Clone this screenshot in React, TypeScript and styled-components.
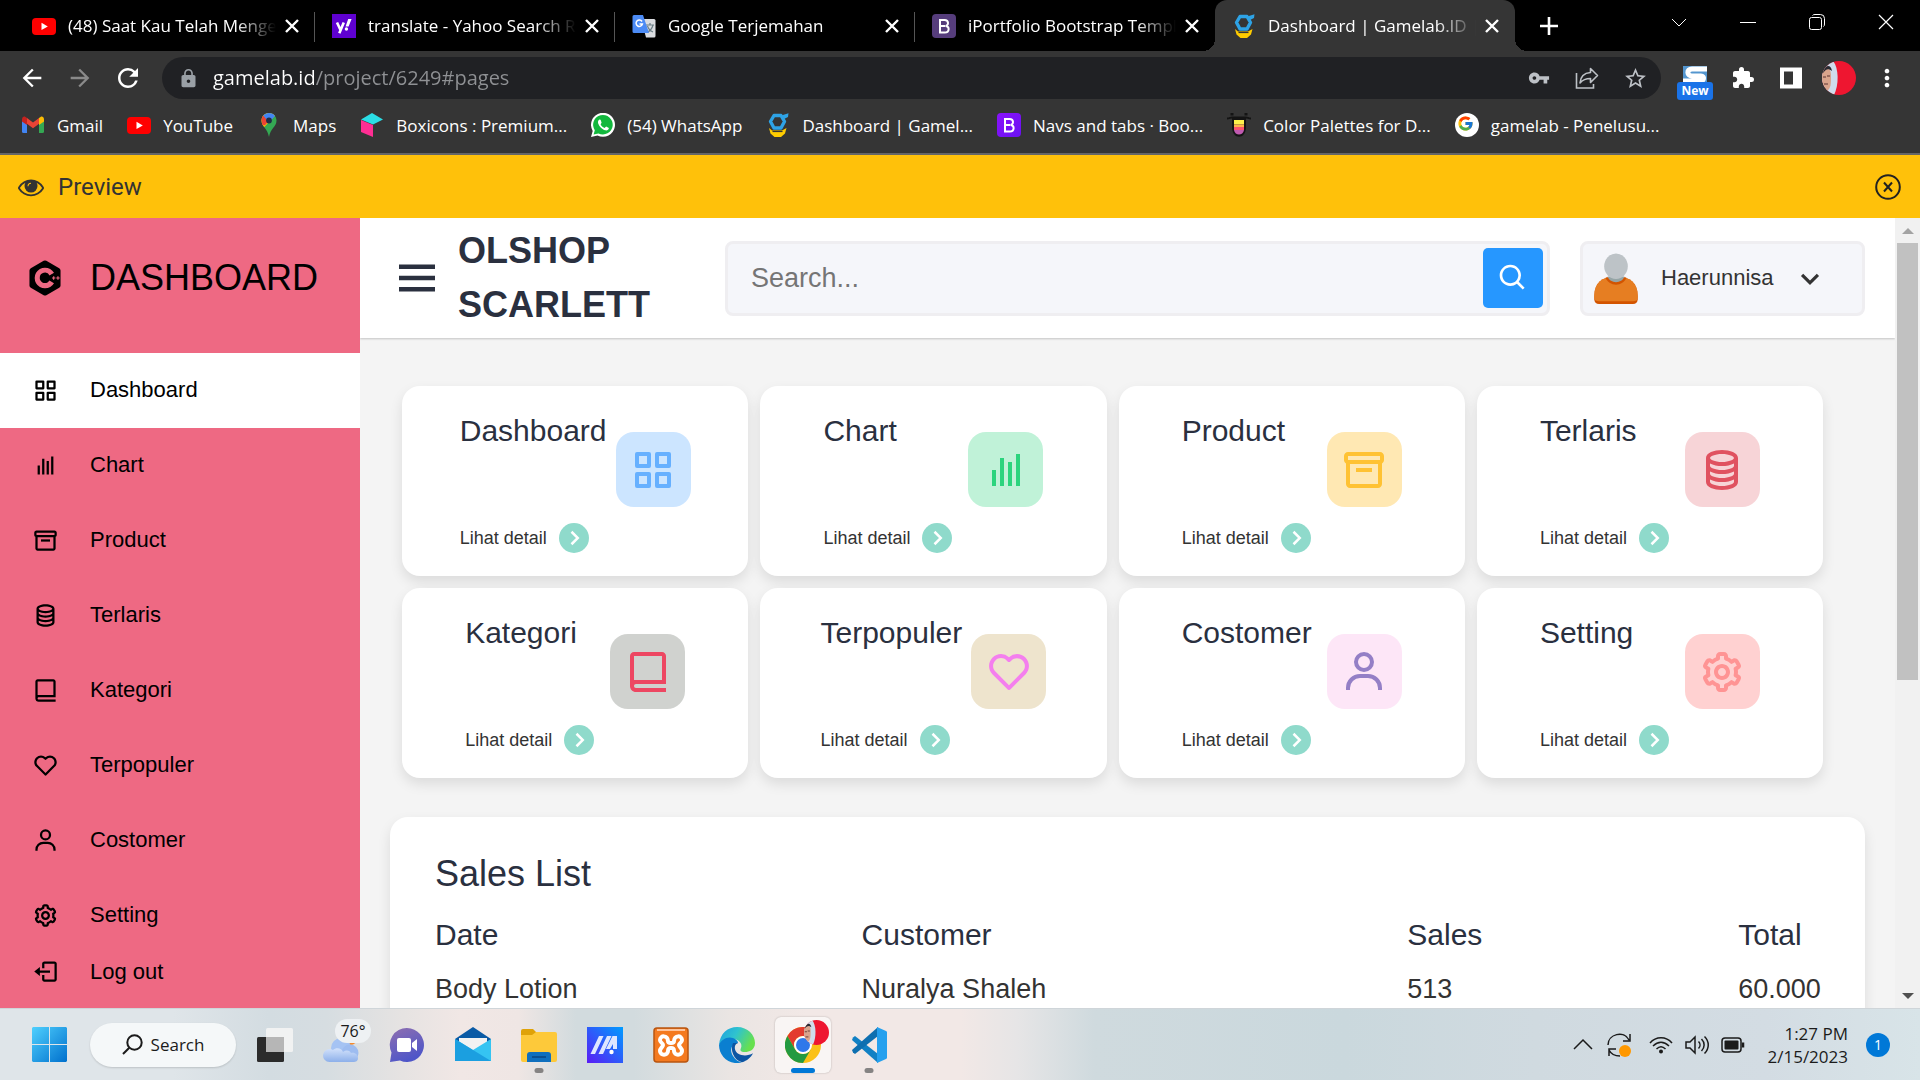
import React from "react";
import styled, { createGlobalStyle } from "styled-components";
import {
  BiBarChart,
  BiChevronDown,
  BiChevronRight,
  BiCog,
  BiCoinStack,
  BiGridAlt,
  BiHeart,
  BiLogOut,
  BiLogoCPlusPlus,
  BiMenu,
  BiSearch,
  BiUser,
} from "react-icons/bi";
import { FcGoogle } from "react-icons/fc";
import { MdArrowBack, MdArrowForward, MdExtension, MdLock, MdMoreVert, MdRefresh, MdStarOutline, MdVpnKey } from "react-icons/md";

const ui = `"Open Sans", "Noto Sans", sans-serif`;
const page = `"Liberation Sans", Arial, sans-serif`;

const GlobalStyle = createGlobalStyle`
  *, *::before, *::after { box-sizing: border-box; }
  body { margin: 0; font-family: ${page}; }
  button { border: 0; padding: 0; margin: 0; background: none; color: inherit; font: inherit; cursor: pointer; }
  a { color: inherit; text-decoration: none; }
  svg { display: block; flex: none; }
`;

const Screen = styled.div`
  display: flex;
  flex-direction: column;
  height: 100vh;
  overflow: hidden;
`;

/* ---------- browser chrome ---------- */

const TabStrip = styled.div`
  display: flex;
  flex: none;
  height: 51px;
  padding-left: 15px;
  background: #000;
  color: #fff;
  font-family: ${ui};
  font-size: 17px;
`;

const Tab = styled.div<{ $active?: boolean; $divider?: boolean }>`
  position: relative;
  display: flex;
  align-items: center;
  gap: 12px;
  flex: 0 1 300px;
  min-width: 0;
  padding: 0 11px 0 17px;
  background: ${(p) => (p.$active ? "#353535" : "transparent")};
  border-radius: 12px 12px 0 0;

  &::after {
    content: "";
    position: absolute;
    right: 0;
    top: 12px;
    width: 1px;
    height: 30px;
    background: ${(p) => (p.$divider ? "#555" : "transparent")};
  }
`;

const TabCurve = styled.span<{ $side: "left" | "right" }>`
  position: absolute;
  bottom: 0;
  ${(p) => p.$side}: -12px;
  width: 12px;
  height: 12px;
  background: radial-gradient(circle at ${(p) => p.$side} top, transparent 12px, #353535 12px);
`;

const TabLabel = styled.button`
  flex: 1;
  min-width: 0;
  margin-right: -8px;
  overflow: hidden;
  text-align: left;
  white-space: nowrap;
  line-height: 28px;
  mask-image: linear-gradient(to right, #000 calc(100% - 40px), transparent);
`;

const IconButton = styled.button<{ $w?: number }>`
  display: flex;
  flex: none;
  align-items: center;
  justify-content: center;
  width: ${(p) => p.$w ?? 24}px;
  height: 40px;
`;

const NewTab = styled(IconButton)`
  align-self: center;
  margin-left: 14px;
`;

const WindowButtons = styled.div`
  display: flex;
  margin-left: auto;
  padding-top: 2px;
`;

const Toolbar = styled.div`
  display: flex;
  flex: none;
  align-items: center;
  height: 54px;
  padding: 0 9px 0 20px;
  background: #353535;
  color: #fff;
`;

const NavButtons = styled.div`
  display: flex;
  gap: 24px;
  margin-right: 22px;
`;

const AddressBar = styled.div`
  display: flex;
  flex: 1;
  align-items: center;
  height: 42px;
  padding: 0 2px 0 16px;
  border-radius: 21px;
  background: #202124;
  color: #bdc1c6;
`;

const AddressInput = styled.input`
  flex: 1;
  min-width: 0;
  margin-left: 14px;
  padding: 0;
  border: 0;
  outline: 0;
  color: transparent;
  background: linear-gradient(to right, #fff 102px, #8f9194 102px);
  background-clip: text;
  font-family: ${ui};
  font-size: 20px;
  line-height: 32px;
`;

const Extensions = styled.div`
  display: flex;
  margin-left: 10px;
`;

const ExtensionButton = styled(IconButton)`
  position: relative;
`;

const NewBadge = styled.span`
  position: absolute;
  left: 6px;
  bottom: -2px;
  width: 36px;
  border-radius: 3px;
  background: #1a73e8;
  color: #fff;
  font: bold 12px/18px ${ui};
  text-align: center;
`;

const Bookmarks = styled.nav`
  display: flex;
  flex: none;
  align-items: center;
  gap: 24px;
  height: 48px;
  padding: 0 20px 8px 21px;
  background: #353535;
  color: #fff;
  font-family: ${ui};
  font-size: 17px;
`;

const Bookmark = styled.a`
  display: flex;
  align-items: center;
  gap: 12px;
  white-space: nowrap;
`;

/* ---------- preview bar ---------- */

const PreviewBar = styled.div`
  display: flex;
  flex: none;
  align-items: center;
  height: 65px;
  padding: 0 19px 0 18px;
  border-top: 2px solid #666;
  background: #ffc10a;
  color: #333;
  font-family: Roboto, sans-serif;
  font-size: 24px;
`;

const PreviewTitle = styled.span`
  flex: 1;
  margin-left: 14px;
`;

/* ---------- dashboard page ---------- */

const Viewport = styled.div`
  display: grid;
  grid-template-columns: 360px 1fr 25px;
  flex: 1;
  min-height: 0;
`;

const Sidebar = styled.aside`
  overflow: hidden;
  background: #ee6983;
  color: #000;
`;

const Brand = styled.a`
  display: flex;
  align-items: center;
  height: 120px;
  margin-bottom: 15px;
  font-size: 36px;
`;

const IconSlot = styled.span`
  display: flex;
  flex: none;
  justify-content: center;
  width: 90px;
`;

const MenuList = styled.ul`
  margin: 0;
  padding: 0;
  list-style: none;
`;

const MenuLink = styled.a<{ $active?: boolean; $short?: boolean }>`
  display: flex;
  align-items: center;
  height: ${(p) => (p.$short ? 38 : 75)}px;
  padding-bottom: 1px;
  background: ${(p) => (p.$active ? "#fff" : "transparent")};
  font-size: 22px;
`;

const Main = styled.main`
  display: flex;
  flex-direction: column;
  min-width: 0;
  overflow: hidden;
  background: #f4f4f4;
`;

const Header = styled.header`
  position: relative;
  display: flex;
  flex: none;
  align-items: center;
  height: 120px;
  padding: 0 30px;
  background: #fff;
  box-shadow: 0 1px 2px rgba(0, 0, 0, 0.2);
`;

const ShopTitle = styled.h1`
  width: 267px;
  margin: 0 0 0 14px;
  padding-right: 60px;
  color: #2a303f;
  font-size: 36px;
  font-weight: bold;
  line-height: 54px;
`;

const SearchBox = styled.form`
  display: flex;
  flex: 1;
  align-items: center;
  height: 75px;
  margin-right: 30px;
  padding: 0 4px 0 23px;
  border: 3px solid #efeef1;
  border-radius: 8px;
  background: #f5f6fa;
`;

const SearchInput = styled.input`
  flex: 1;
  min-width: 0;
  padding: 0;
  border: 0;
  outline: 0;
  background: transparent;
  font: 27px/36px ${page};

  &::placeholder {
    color: #757575;
  }
`;

const SearchButton = styled.button`
  display: flex;
  align-items: center;
  justify-content: center;
  width: 60px;
  height: 60px;
  border-radius: 5px;
  background: #2697ff;
  color: #fff;
`;

const Profile = styled.button`
  display: flex;
  align-items: center;
  width: 285px;
  height: 75px;
  padding: 0 8px;
  border: 3px solid #efeef1;
  border-radius: 8px;
  background: #f5f6fa;
  color: #333;
  font-size: 22px;
`;

const ProfileName = styled.span`
  margin: 0 17px 0 20px;
`;

const Content = styled.div`
  padding: 48px 30px 0;
`;

const Cards = styled.section`
  display: grid;
  grid-template-columns: repeat(4, 1fr);
  gap: 12px;
  margin: 0 42px 39px 12px;
`;

const Card = styled.article`
  display: flex;
  align-items: flex-start;
  justify-content: center;
  gap: 9px;
  padding: 22px 0 23px;
  border-radius: 18px;
  background: #fff;
  box-shadow: 0 6px 13px rgba(0, 0, 0, 0.1);
`;

const CardText = styled.div`
  min-width: 136px;
`;

const CardTitle = styled.h2`
  margin: 0 0 69px;
  color: #2a303f;
  font-size: 30px;
  font-weight: normal;
  line-height: 46px;
`;

const DetailLink = styled.a`
  display: flex;
  align-items: center;
  gap: 12px;
  color: #333;
  font-size: 18px;
  line-height: 30px;
`;

const Dot = styled.span`
  display: flex;
  align-items: center;
  justify-content: center;
  width: 30px;
  height: 30px;
  border-radius: 50%;
  background: #8fdacb;
  color: #fff;
`;

const CardIcon = styled.div<{ $bg: string; $fg: string }>`
  display: flex;
  align-items: center;
  justify-content: center;
  width: 75px;
  height: 75px;
  margin-top: 24px;
  border-radius: 18px;
  background: ${(p) => p.$bg};
  color: ${(p) => p.$fg};
`;

const Sales = styled.section`
  padding: 30px 45px;
  border-radius: 18px;
  background: #fff;
  box-shadow: 0 6px 13px rgba(0, 0, 0, 0.1);
`;

const SalesTitle = styled.h2`
  margin: 0 0 7px;
  color: #2a303f;
  font-size: 36px;
  font-weight: normal;
  line-height: 54px;
`;

const SalesTable = styled.table`
  width: 100%;
  border-collapse: collapse;
  table-layout: fixed;
  text-align: left;
  white-space: nowrap;

  th {
    padding: 0;
    color: #2a303f;
    font-size: 30px;
    font-weight: normal;
    line-height: 54px;
  }
  td {
    padding: 0;
    color: #333;
    font-size: 27px;
    line-height: 54px;
  }
`;

const Col = styled.col<{ $share: number }>`
  width: ${(p) => p.$share}%;
`;

const ScrollTrack = styled.div`
  display: flex;
  flex-direction: column;
  align-items: center;
  justify-content: space-between;
  background: #f1f1f1;
`;

const ScrollArrow = styled.span<{ $down?: boolean }>`
  display: flex;
  flex: none;
  align-items: center;
  height: 25px;
  color: ${(p) => (p.$down ? "#505050" : "#a3a3a3")};
`;

const ScrollRail = styled.div`
  flex: 1;
  width: 21px;
`;

const ScrollThumb = styled.div`
  height: 59%;
  background: #c1c1c1;
`;

/* ---------- taskbar ---------- */

const Taskbar = styled.footer`
  position: relative;
  display: flex;
  flex: none;
  align-items: center;
  height: 72px;
  padding: 0 30px 0 32px;
  border-top: 1px solid #cfd5d9;
  background: linear-gradient(
    to right,
    #dfe5e9 0,
    #dfe5e9 9%,
    #d3dce1 14%,
    #d6dde1 17%,
    #e6e3e2 21%,
    #f1e7e5 24%,
    #efe6e4 27%,
    #d2dbde 30%,
    #d2dbde 33%,
    #eae5e3 38%,
    #f2e8e6 42%,
    #f2e8e6 50%,
    #e6e5e6 53%,
    #cfdade 57%,
    #cad8dd 70%,
    #d0dae0 80%,
    #d3dce3 92%,
    #d8e4e8 100%
  );
  color: #1b1b1b;
  font-family: ${ui};
  font-size: 17px;
`;

const TaskSearch = styled.button`
  display: flex;
  align-items: center;
  justify-content: center;
  gap: 8px;
  width: 146px;
  height: 44px;
  margin: 0 6px 0 23px;
  border-radius: 22px;
  background: #f5f8f9;
  box-shadow: 0 1px 2px rgba(0, 0, 0, 0.15);
`;

const TaskApp = styled.button<{ $open?: boolean }>`
  position: relative;
  display: flex;
  align-items: center;
  justify-content: center;
  width: 56px;
  height: 56px;
  margin: 0 5px;
  border-radius: 6px;
  background: ${(p) => (p.$open ? "#f9f5f4" : "transparent")};
  box-shadow: ${(p) => (p.$open ? "0 0 2px rgba(0, 0, 0, 0.25)" : "none")};
`;

const Running = styled.span<{ $active?: boolean }>`
  position: absolute;
  bottom: 0;
  left: 50%;
  width: ${(p) => (p.$active ? 24 : 9)}px;
  height: 5px;
  border-radius: 3px;
  background: ${(p) => (p.$active ? "#0078d7" : "#858383")};
  transform: translateX(-50%);
`;

const Temperature = styled.span`
  position: absolute;
  top: 2px;
  left: 22px;
  width: 36px;
  border-radius: 12px;
  background: #eef1f3;
  font-size: 16px;
  line-height: 24px;
  text-align: center;
`;

const Tray = styled.div`
  display: flex;
  align-items: center;
  gap: 18px;
  margin-left: auto;
`;

const TrayGroup = styled.div`
  display: flex;
  gap: 12px;
`;

const Clock = styled.div`
  width: 85px;
  font-size: 17px;
  line-height: 23px;
  text-align: right;
`;

const Notifications = styled.button`
  width: 24px;
  height: 24px;
  border-radius: 50%;
  background: #0078d7;
  color: #fff;
  font-size: 14px;
  line-height: 24px;
`;

/* ---------- drawings ---------- */

type IconProps = { size: number };

const BoxIcon = ({ size }: IconProps) => (
  <svg width={size} height={size} viewBox="0 0 24 24" fill="currentColor">
    <path d="M20 3H4c-1.103 0-2 .897-2 2v2c0 .736.405 1.375 1 1.722V19c0 1.103.897 2 2 2h14c1.103 0 2-.897 2-2V8.722c.595-.347 1-.986 1-1.722V5c0-1.103-.897-2-2-2zM4 5h16v2H4zM5 19V9h14v10z" fillRule="evenodd" />
    <path d="M8 11h8v2H8z" />
  </svg>
);

const BookIcon = ({ size }: IconProps) => (
  <svg width={size} height={size} viewBox="0 0 24 24" fill="currentColor">
    <path d="M19 2H5C3.900 2 3 2.900 3 4v15c0 1.700 1.300 3 3 3h15v-2H6c-.6 0-1-.4-1-1s.4-1 1-1h15V4c0-1.100-.9-2-2-2zM5 16V4h14v12z" fillRule="evenodd" />
  </svg>
);

const YouTube = () => (
  <svg width="24" height="24" viewBox="0 0 24 24">
    <rect x="0" y="4" width="24" height="17" rx="4" fill="#f00" />
    <path d="M9.500 8.800v7.200l6.300-3.600z" fill="#fff" />
  </svg>
);

const Yahoo = () => (
  <svg width="24" height="24" viewBox="0 0 24 24">
    <rect width="24" height="24" fill="#5f01d1" />
    <path d="M5 8.500l3.400 7.200M11.800 8.500L7.300 19.300" stroke="#fff" strokeWidth="2.600" fill="none" />
    <path d="M16.200 5h3.400l-3 7.500h-3z" fill="#fff" />
    <circle cx="14.400" cy="15" r="1.700" fill="#fff" />
  </svg>
);

const Translate = () => (
  <svg width="24" height="24" viewBox="0 0 24 24">
    <path d="M9 5h13a1.500 1.500 0 0 1 1.500 1.500V22a1.500 1.500 0 0 1-1.500 1.500h-8z" fill="#dadce0" />
    <path d="M14 11h8M18 9v2M21 11c-1 4-3 6-6 7.500M15.500 12c1 3 3 5 5.500 6" stroke="#6b7f86" strokeWidth="1.200" fill="none" />
    <path d="M2 1h9l6 18H2A1.500 1.500 0 0 1 .5 17.500v-15A1.500 1.500 0 0 1 2 1z" fill="#4c8bf5" />
    <path d="M10 7.500A3.200 3.200 0 1 0 10.400 10H7.500" stroke="#fff" strokeWidth="1.500" fill="none" />
  </svg>
);

const Bootstrap = ({ from, to }: { from: string; to: string }) => (
  <svg width="24" height="24" viewBox="0 0 24 24">
    <defs>
      <linearGradient id={"bs" + from.slice(1)} x1="0" y1="0" x2="1" y2="1">
        <stop offset="0" stopColor={from} />
        <stop offset="1" stopColor={to} />
      </linearGradient>
    </defs>
    <rect width="24" height="24" rx="4" fill={`url(#bs${from.slice(1)})`} />
    <path d="M8 6v12.500h4.800c5 0 5-6.500.6-6.500 3.600-.2 3.600-6-.8-6zM8 12h5" stroke="#fff" strokeWidth="2" fill="none" />
  </svg>
);

const Gamelab = () => (
  <svg width="24" height="24" viewBox="0 0 24 24">
    <path d="M16 2.200l6.500-2-.5 3.800-4 2z" fill="#2ea3e6" />
    <path d="M8 2.500h7l3.500 6-3.500 6.500H8L4.500 8.500z" fill="none" stroke="#2ea3e6" strokeWidth="3.400" strokeLinejoin="round" />
    <path d="M3 15l3 2.500h10l4.500-2.500-1.500 5.500-4 3.500H8.500l-4-3.500z" fill="#fc0" />
    <path d="M6.500 18.500h10" stroke="#353535" strokeWidth="1.200" />
  </svg>
);

const Gmail = () => (
  <svg width="24" height="24" viewBox="0 0 24 24">
    <path d="M1 6v12.500A1.500 1.500 0 0 0 2.500 20H6V10z" fill="#4285f4" />
    <path d="M23 6v12.500a1.500 1.500 0 0 1-1.500 1.500H18V10z" fill="#34a853" />
    <path d="M6 10.800V5l6 4.500L18 5v5.800l-6 4.500z" fill="#ea4335" />
    <path d="M1 6.500v2l5 3.500V5L4.500 4C3 3 1 4 1 6.500z" fill="#c5221f" />
    <path d="M23 6.500v2L18 12V5l1.500-1C21 3 23 4 23 6.500z" fill="#fbbc04" />
  </svg>
);

const MapsPin = () => (
  <svg width="24" height="24" viewBox="0 0 24 24">
    <path d="M12 0c4 0 7.500 3 7.500 7.500C19.500 14 13.500 15 12 24 10.500 15 4.500 14 4.500 7.500 4.500 3 8 0 12 0z" fill="#34a853" />
    <path d="M4.500 7.500c0 3 1.300 4.800 2.800 6.500L17.800 2.800C16.400 1 14.300 0 12 0 8 0 4.500 3 4.500 7.500z" fill="#fbbc04" />
    <path d="M4.500 7.500c0-2 .8-3.800 2-5l5.500 5-4 4.700-2.500-.2z" fill="#ea4335" />
    <path d="M6.300 2.600C7.700 1 9.800 0 12 0c2.500 0 4.700 1.200 6 3l-6 6.500z" fill="#4285f4" />
    <circle cx="12" cy="7.500" r="2.900" fill="#202c44" />
  </svg>
);

const Boxicons = () => (
  <svg width="24" height="24" viewBox="0 0 24 24">
    <path d="M1 6.500L12 0l11 6.500-10 5z" fill="#2bdde5" />
    <path d="M1 7l12 5v12L1 19z" fill="#ff2e93" />
  </svg>
);

const WhatsApp = () => (
  <svg width="24" height="24" viewBox="0 0 24 24">
    <path d="M0 24l1.700-6A12 12 0 1 1 6.500 22.500z" fill="#fff" />
    <path d="M2.600 21.400l1.200-4.200a9.800 9.800 0 1 1 3.600 3.200z" fill="#12b83d" />
    <path d="M8.500 6.500c-1 .5-2 2-1.300 4 1 3 4 6 7 6.800 2 .5 3.500-.7 3.700-2.200l-2.800-1.500-1.500 1.500c-2-.8-3.300-2.200-4-3.800l1-1.500-1-3z" fill="#fff" />
  </svg>
);

const ColorHunt = () => (
  <svg width="24" height="24" viewBox="0 0 24 24">
    <path d="M5 0v2.500M19 0v2.500" stroke="#141414" strokeWidth="3" />
    <path d="M0 5.500c3 0 3-1 5-1h14c2 0 2 1 5 1" stroke="#141414" strokeWidth="2" fill="none" />
    <path d="M5 5h14v9c0 13-14 13-14 0z" fill="#141414" />
    <path d="M7 7h10v4.500H7z" fill="#fcf04a" />
    <path d="M7 11.500h10V14H7z" fill="#ffb24a" />
    <path d="M7 14h10v3H7z" fill="#f9546e" />
    <path d="M7 17h10c-1 6-9 6-10 0z" fill="#c05ab0" />
  </svg>
);

const GoogleBadge = () => (
  <svg width="24" height="24" viewBox="0 0 24 24">
    <circle cx="12" cy="12" r="12" fill="#fff" />
    <FcGoogle x="2" y="2" width="20" height="20" />
  </svg>
);

const Cross = ({ size, width }: { size: number; width: number }) => (
  <svg width={size} height={size} viewBox={`0 0 ${size} ${size}`}>
    <path d={`M1 1L${size - 1} ${size - 1}M${size - 1} 1L1 ${size - 1}`} stroke="#fff" strokeWidth={width} />
  </svg>
);

const Portrait = ({ size }: { size: number }) => (
  <svg width={size} height={size} viewBox="0 0 34 34">
    <defs>
      <clipPath id={"face" + size}>
        <circle cx="17" cy="17" r="17" />
      </clipPath>
    </defs>
    <g clipPath={`url(#face${size})`}>
      <rect width="34" height="34" fill="#ee1630" />
      <path d="M0 0h11c6 7 6 24 1 34H0z" fill="#cfdcec" />
      <path d="M0 9c5-5 9-2 9 6s0 12-4 15l-5-2z" fill="#d9a48c" />
      <path d="M1 9c4-6 8-5 9 1-4-3-6-2-9 2z" fill="#2a2a32" />
      <path d="M1 16h3M5 15h3M2 23h4" stroke="#5e3432" strokeWidth="1.200" />
    </g>
  </svg>
);

const Eye = () => (
  <svg width="26" height="26" viewBox="0 0 1792 1792" fill="#333">
    <path d="M1664 960q-152-236-381-353 61 104 61 225 0 185-131.500 316.500t-316.500 131.500-316.500-131.500-131.500-316.500q0-121 61-225-229 117-381 353 133 205 333.500 326.500t434.500 121.500 434.500-121.500 333.500-326.500zm-720-384q0-20-14-34t-34-14q-125 0-214.500 89.500t-89.500 214.500q0 20 14 34t34 14 34-14 14-34q0-86 61-147t147-61q20 0 34-14t14-34zm848 384q0 34-20 69-140 230-376.500 368.500t-499.500 138.500-499.500-139-376.500-368q-20-35-20-69t20-69q140-229 376.500-368t499.500-139 499.500 139 376.500 368q20 35 20 69z" />
    <circle cx="896" cy="832" r="400" />
    <path d="M690 850c0-130 80-220 206-220" stroke="#ffc10a" strokeWidth="70" fill="none" />
  </svg>
);

const CloseCircle = () => (
  <svg width="26" height="26" viewBox="0 0 26 26" fill="none" stroke="#222" strokeWidth="2">
    <circle cx="13" cy="13" r="11.800" />
    <path d="M9 8.500l8 9M17 8.500l-8 9" />
  </svg>
);

const Person = () => (
  <svg width="50" height="51" viewBox="-1 0 52 54">
    <path d="M2 46c0-14 8-21 23-21s23 7 23 21v3c0 3-2 5-5 5H7c-3 0-5-2-5-5z" fill="#d35400" />
    <path d="M2 45c0-13 8-20 23-20s23 7 23 20v2c0 3-2 4-5 4H7c-3 0-5-1-5-4z" fill="#e67e22" />
    <path d="M14 26c3 10 19 10 22 0z" fill="#d35400" />
    <path d="M16 25c3 8 15 8 18 0z" fill="#95a5a6" />
    <ellipse cx="25" cy="14" rx="12.500" ry="13.500" fill="#bdc3c7" />
  </svg>
);

const Triangle = ({ down }: { down?: boolean }) => (
  <svg width="12" height="6" viewBox="0 0 12 6" fill="currentColor">
    <path d={down ? "M0 0h12l-6 6z" : "M0 6h12L6 0z"} />
  </svg>
);

const Share = () => (
  <svg width="24" height="24" viewBox="0 0 24 24" fill="none" stroke="currentColor" strokeWidth="1.600">
    <path d="M1.500 7v15h17v-4" />
    <path d="M5 17c.5-6.500 4-10 10.500-10.500V2.500l7 7-7 7v-4C11 12.500 7.500 14 5 17z" strokeLinejoin="round" />
  </svg>
);

const SidePanel = () => (
  <svg width="24" height="24" viewBox="0 0 24 24">
    <path d="M1 1.500h22v21H1z" fill="#fff" />
    <path d="M5 5.500h9v13H5z" fill="#353535" />
  </svg>
);

const SExtension = () => (
  <svg width="24" height="24" viewBox="0 0 24 24">
    <rect width="24" height="24" fill="#5496cf" />
    <path d="M24 3H9C3 3 4 10 9 10h9c4 0 3 5-1 5H0" stroke="#fff" strokeWidth="5" fill="none" />
  </svg>
);

const Windows = () => (
  <svg width="35" height="35" viewBox="0 0 35 35">
    <defs>
      <linearGradient id="win" x1="0" y1="0" x2="1" y2="1">
        <stop offset="0" stopColor="#4fd0fe" />
        <stop offset="1" stopColor="#0070cd" />
      </linearGradient>
    </defs>
    <path d="M1 0h16v17H0V1zM18 0h16l1 1v16H18zM0 18h17v17H1l-1-1zM18 18h17v16l-1 1H18z" fill="url(#win)" />
  </svg>
);

const TaskLens = () => (
  <svg width="21" height="21" viewBox="0 0 21 21" fill="none" stroke="#1b1b1b" strokeWidth="2">
    <circle cx="12.500" cy="8.500" r="7.200" />
    <path d="M7.300 13.700L1 20" />
  </svg>
);

const TaskView = () => (
  <svg width="36" height="36" viewBox="0 0 36 36">
    <rect x="0" y="10" width="27" height="25" rx="1.500" fill="#2b2b2b" />
    <rect x="9" y="1" width="27" height="24" rx="1.500" fill="#f1f2f2" />
    <path d="M9 10h18v15H9z" fill="#b6b6b6" />
  </svg>
);

const Weather = () => (
  <svg width="36" height="36" viewBox="0 0 36 36">
    <defs>
      <linearGradient id="cloud" x1="0" y1="0" x2="0" y2="1">
        <stop offset="0" stopColor="#d3e2fb" />
        <stop offset="1" stopColor="#8db0ea" />
      </linearGradient>
    </defs>
    <circle cx="27" cy="10" r="8" fill="#f58a2c" />
    <circle cx="18" cy="21" r="10" fill="#a5c3f3" />
    <circle cx="27" cy="26" r="8.500" fill="#9dbcf0" />
    <path d="M7 35a6.500 6.500 0 1 1 3-12c3-3 9-2 10 2 3-2 6-2 8 1 4-1 7 2 7 5s-2 4-5 4z" fill="url(#cloud)" />
  </svg>
);

const Chat = () => (
  <svg width="36" height="36" viewBox="0 0 36 36">
    <defs>
      <linearGradient id="chat" x1="0" y1="0" x2="0.400" y2="1">
        <stop offset="0" stopColor="#8f6fb0" />
        <stop offset="1" stopColor="#4f56c8" />
      </linearGradient>
    </defs>
    <path d="M18 1a17 17 0 1 1-7 32.500L1 35l1.500-9.500A17 17 0 0 1 18 1z" fill="url(#chat)" />
    <rect x="8" y="11" width="14" height="14" rx="2" fill="#fff" />
    <path d="M23 16l5-4v12l-5-4z" fill="#fff" />
  </svg>
);

const Mail = () => (
  <svg width="36" height="36" viewBox="0 0 36 36">
    <path d="M0 12L18 0l18 12v4H0z" fill="#0a5aa5" />
    <path d="M4 11h28v10L18 26 4 21z" fill="#f2f2f2" />
    <path d="M0 12l18 11L36 12v22H0z" fill="#35c4f2" />
    <path d="M0 12l36 22H0z" fill="#1b9fe0" />
  </svg>
);

const Folder = () => (
  <svg width="36" height="36" viewBox="0 0 36 36">
    <path d="M0 4a2 2 0 0 1 2-2h10l4 4-4 3H0z" fill="#dfa208" />
    <path d="M0 8h11l4-3h19a2 2 0 0 1 2 2v26a2 2 0 0 1-2 2H2a2 2 0 0 1-2-2z" fill="#fdc93a" />
    <path d="M6 35v-7a3 3 0 0 1 3-3h18a3 3 0 0 1 3 3v7z" fill="#0f6fbe" />
    <path d="M11 30h14" stroke="#0a4f91" strokeWidth="2" />
  </svg>
);

const MyAsus = () => (
  <svg width="36" height="36" viewBox="0 0 36 36">
    <defs>
      <linearGradient id="asus" x1="0" y1="1" x2="1" y2="0">
        <stop offset="0" stopColor="#5a1cf5" />
        <stop offset="1" stopColor="#009cff" />
      </linearGradient>
    </defs>
    <rect width="36" height="36" fill="url(#asus)" />
    <path d="M3.500 27l8.500-18h4.500L8 27zM11.500 27L20 9h4.500L16 27zM19 22l6.500-13H30v13h-4v-5l-3 5z" fill="#dfe6ff" />
    <circle cx="24.500" cy="25" r="2.200" fill="#fff" />
  </svg>
);

const Xampp = () => (
  <svg width="36" height="36" viewBox="0 0 36 36">
    <rect x="1" y="1" width="34" height="34" rx="3" fill="#f47a20" stroke="#b85510" strokeWidth="1.500" />
    <path d="M4 3h28" stroke="#ffc49b" strokeWidth="2" />
    <path
      d="M15 14c0-6-8-6-8-1 0 3 3 3 3 5s-3 3-3 6c0 5 8 5 8 0 0-3 1-3 3-3s3 0 3 3c0 5 8 5 8 0 0-3-3-4-3-6s3-2 3-5c0-5-8-5-8 1 0 2-1 2-3 2s-3 0-3-2z"
      fill="none"
      stroke="#fff"
      strokeWidth="4"
    />
  </svg>
);

const Edge = () => (
  <svg width="36" height="36" viewBox="0 0 36 36">
    <defs>
      <linearGradient id="edgeTop" x1="0" y1="0" x2="1" y2="0.400">
        <stop offset="0" stopColor="#1e9fe0" />
        <stop offset="0.500" stopColor="#2fc3cf" />
        <stop offset="1" stopColor="#67e04f" />
      </linearGradient>
    </defs>
    <path d="M0 18C1 6 9 0 18 0c11 0 18 8 18 16 0 7-6 9-10 9-5 0-5-2-4-4 2-5-3-9-8-9C7 12 2 15 0 18z" fill="url(#edgeTop)" />
    <path d="M0 18c2-5 8-9 14-7 3 1 5 3 5 5-6 0-9 7-5 13 2 3 5 6 9 6.300C10 39 0 29 0 18z" fill="#0b7fd0" />
    <path d="M14 16c-3 6 0 17 9 19.300 5-1.300 9-5 11-9-7 4-17 2-18-4-.4-3 0-5 3-6.300z" fill="#0c55a3" />
  </svg>
);

const Chrome = () => (
  <svg width="36" height="36" viewBox="0 0 36 36">
    <circle cx="18" cy="18" r="18" fill="#fbc116" />
    <path d="M2.400 9A18 18 0 0 1 33.600 9H18a9 9 0 0 0-7.800 13.500z" fill="#e33b2e" />
    <path d="M2.400 9A18 18 0 0 0 18 36l7.800-13.500A9 9 0 0 1 10.200 22.500z" fill="#249a41" />
    <circle cx="18" cy="18" r="9" fill="#fff" />
    <circle cx="18" cy="18" r="7" fill="#2f78ea" />
  </svg>
);

const ChromeProfile = styled.span`
  position: absolute;
  top: 3px;
  right: 2px;
`;

const VsCode = () => (
  <svg width="36" height="36" viewBox="0 0 36 36">
    <path d="M2 10.500l2-1.500 23 18v9L1 13z" fill="#1180c4" />
    <path d="M2 25.500L4 27l23-18V0L1 23z" fill="#0e6fb0" />
    <path d="M26 0l9 4a1.500 1.500 0 0 1 1 1.500v25a1.500 1.500 0 0 1-1 1.500l-9 4z" fill="#25a0ee" />
  </svg>
);

const TrayIcon = styled.svg.attrs({ width: 24, height: 24, viewBox: "0 0 24 24", fill: "none", stroke: "#1b1b1b", strokeWidth: 1.5 })``;

/* ---------- data ---------- */

const tabs = [
  { icon: <YouTube />, label: "(48) Saat Kau Telah Menge", divider: true },
  { icon: <Yahoo />, label: "translate - Yahoo Search R", divider: true },
  { icon: <Translate />, label: "Google Terjemahan", divider: true },
  { icon: <Bootstrap from="#563d7c" to="#563d7c" />, label: "iPortfolio Bootstrap Templ" },
  { icon: <Gamelab />, label: "Dashboard | Gamelab.ID |", active: true },
];

const bookmarks = [
  { icon: <Gmail />, label: "Gmail" },
  { icon: <YouTube />, label: "YouTube" },
  { icon: <MapsPin />, label: "Maps" },
  { icon: <Boxicons />, label: "Boxicons : Premium..." },
  { icon: <WhatsApp />, label: "(54) WhatsApp" },
  { icon: <Gamelab />, label: "Dashboard | Gamel..." },
  { icon: <Bootstrap from="#8a12fa" to="#6a11f2" />, label: "Navs and tabs · Boo..." },
  { icon: <ColorHunt />, label: "Color Palettes for D..." },
  { icon: <GoogleBadge />, label: "gamelab - Penelusu..." },
];

const sections = [
  { label: "Dashboard", Icon: BiGridAlt, bg: "#cce5ff", fg: "#66b0ff" },
  { label: "Chart", Icon: BiBarChart, bg: "#c0f2d8", fg: "#2bd47d" },
  { label: "Product", Icon: BoxIcon, bg: "#ffe8b3", fg: "#ffc233" },
  { label: "Terlaris", Icon: BiCoinStack, bg: "#f7d4d7", fg: "#e05260" },
  { label: "Kategori", Icon: BookIcon, bg: "#d0d2cf", fg: "#ed4762" },
  { label: "Terpopuler", Icon: BiHeart, bg: "#eee4cd", fg: "#f47fee" },
  { label: "Costomer", Icon: BiUser, bg: "#fde6f7", fg: "#947fc6" },
  { label: "Setting", Icon: BiCog, bg: "#ffd1d1", fg: "#ff9494" },
];

const columns = [
  { name: "Date", share: 30.8 },
  { name: "Customer", share: 39.4 },
  { name: "Sales", share: 23.9 },
  { name: "Total", share: 5.9 },
];

const sales = [["Body Lotion", "Nuralya Shaleh", "513", "60.000"]];

const apps = [
  { name: "Task view", icon: <TaskView /> },
  { name: "Weather", icon: <Weather />, extra: <Temperature>76°</Temperature> },
  { name: "Chat", icon: <Chat /> },
  { name: "Mail", icon: <Mail /> },
  { name: "File Explorer", icon: <Folder />, extra: <Running /> },
  { name: "MyASUS", icon: <MyAsus /> },
  { name: "XAMPP", icon: <Xampp /> },
  { name: "Edge", icon: <Edge /> },
  {
    name: "Chrome",
    icon: <Chrome />,
    open: true,
    extra: (
      <>
        <ChromeProfile>
          <Portrait size={25} />
        </ChromeProfile>
        <Running $active />
      </>
    ),
  },
  { name: "VS Code", icon: <VsCode />, extra: <Running /> },
];

export default function App() {
  return (
    <Screen>
      <GlobalStyle />
      <TabStrip>
        {tabs.map((t) => (
          <Tab key={t.label} $active={t.active} $divider={t.divider}>
            {t.active && <TabCurve $side="left" />}
            {t.active && <TabCurve $side="right" />}
            {t.icon}
            <TabLabel>{t.label}</TabLabel>
            <IconButton aria-label="Close tab">
              <Cross size={14} width={2.4} />
            </IconButton>
          </Tab>
        ))}
        <NewTab $w={40} aria-label="New tab">
          <svg width="18" height="18" viewBox="0 0 18 18" stroke="#fff" strokeWidth="2.600">
            <path d="M9 0v18M0 9h18" />
          </svg>
        </NewTab>
        <WindowButtons>
          <IconButton $w={69} aria-label="Search tabs">
            <svg width="16" height="9" viewBox="0 0 16 9" stroke="#fff" fill="none">
              <path d="M1 1l7 7 7-7" />
            </svg>
          </IconButton>
          <IconButton $w={69} aria-label="Minimise">
            <svg width="16" height="3" viewBox="0 0 16 3" stroke="#fff">
              <path d="M0 1.500h16" />
            </svg>
          </IconButton>
          <IconButton $w={69} aria-label="Restore">
            <svg width="16" height="16" viewBox="0 0 16 16" stroke="#fff" fill="none">
              <rect x="0.500" y="3.500" width="12" height="12" rx="2" />
              <path d="M3.500 1.500Q4 .5 6 .5h5.500q4 0 4 4V10q0 2-1 2.500" />
            </svg>
          </IconButton>
          <IconButton $w={69} aria-label="Close window">
            <Cross size={16} width={1.2} />
          </IconButton>
        </WindowButtons>
      </TabStrip>

      <Toolbar>
        <NavButtons>
          <IconButton aria-label="Back">
            <MdArrowBack size={28} />
          </IconButton>
          <IconButton aria-label="Forward">
            <MdArrowForward size={28} color="#8a8a8a" />
          </IconButton>
          <IconButton aria-label="Reload">
            <MdRefresh size={30} />
          </IconButton>
        </NavButtons>
        <AddressBar>
          <MdLock size={21} color="#9aa0a6" />
          <AddressInput aria-label="Address" defaultValue="gamelab.id/project/6249#pages" />
          <IconButton $w={48} aria-label="Passwords">
            <MdVpnKey size={22} />
          </IconButton>
          <IconButton $w={48} aria-label="Share">
            <Share />
          </IconButton>
          <IconButton $w={48} aria-label="Bookmark this page">
            <MdStarOutline size={25} />
          </IconButton>
        </AddressBar>
        <Extensions>
          <ExtensionButton $w={48} aria-label="Extension, new">
            <SExtension />
            <NewBadge>New</NewBadge>
          </ExtensionButton>
          <IconButton $w={48} aria-label="Extensions">
            <MdExtension size={24} />
          </IconButton>
          <IconButton $w={48} aria-label="Side panel">
            <SidePanel />
          </IconButton>
          <IconButton $w={48} aria-label="Account">
            <Portrait size={34} />
          </IconButton>
          <IconButton $w={48} aria-label="Menu">
            <MdMoreVert size={28} />
          </IconButton>
        </Extensions>
      </Toolbar>

      <Bookmarks>
        {bookmarks.map((b) => (
          <Bookmark key={b.label} href="#">
            {b.icon}
            {b.label}
          </Bookmark>
        ))}
      </Bookmarks>

      <PreviewBar>
        <Eye />
        <PreviewTitle>Preview</PreviewTitle>
        <button aria-label="Close preview">
          <CloseCircle />
        </button>
      </PreviewBar>

      <Viewport>
        <Sidebar>
          <Brand href="#">
            <IconSlot>
              <BiLogoCPlusPlus size={42} />
            </IconSlot>
            DASHBOARD
          </Brand>
          <MenuList>
            {sections.map(({ label, Icon }, i) => (
              <li key={label}>
                <MenuLink href="#" $active={i === 0}>
                  <IconSlot>
                    <Icon size={27} />
                  </IconSlot>
                  {label}
                </MenuLink>
              </li>
            ))}
            <li>
              <MenuLink href="#" $short>
                <IconSlot>
                  <BiLogOut size={27} />
                </IconSlot>
                Log out
              </MenuLink>
            </li>
          </MenuList>
        </Sidebar>

        <Main>
          <Header>
            <IconButton $w={54} aria-label="Toggle menu">
              <BiMenu size={54} color="#2a303f" />
            </IconButton>
            <ShopTitle>OLSHOP SCARLETT</ShopTitle>
            <SearchBox>
              <SearchInput aria-label="Search" placeholder="Search..." />
              <SearchButton type="button" aria-label="Search">
                <BiSearch size={32} />
              </SearchButton>
            </SearchBox>
            <Profile>
              <Person />
              <ProfileName>Haerunnisa</ProfileName>
              <BiChevronDown size={38} />
            </Profile>
          </Header>

          <Content>
            <Cards>
              {sections.map(({ label, Icon, bg, fg }) => (
                <Card key={label}>
                  <CardText>
                    <CardTitle>{label}</CardTitle>
                    <DetailLink href="#">
                      Lihat detail
                      <Dot>
                        <BiChevronRight size={30} />
                      </Dot>
                    </DetailLink>
                  </CardText>
                  <CardIcon $bg={bg} $fg={fg}>
                    <Icon size={48} />
                  </CardIcon>
                </Card>
              ))}
            </Cards>

            <Sales>
              <SalesTitle>Sales List</SalesTitle>
              <SalesTable>
                <colgroup>
                  {columns.map((c) => (
                    <Col key={c.name} $share={c.share} />
                  ))}
                </colgroup>
                <thead>
                  <tr>
                    {columns.map((c) => (
                      <th key={c.name}>{c.name}</th>
                    ))}
                  </tr>
                </thead>
                <tbody>
                  {sales.map((row) => (
                    <tr key={row[0]}>
                      {row.map((cell) => (
                        <td key={cell}>{cell}</td>
                      ))}
                    </tr>
                  ))}
                </tbody>
              </SalesTable>
            </Sales>
          </Content>
        </Main>

        <ScrollTrack>
          <ScrollArrow>
            <Triangle />
          </ScrollArrow>
          <ScrollRail>
            <ScrollThumb />
          </ScrollRail>
          <ScrollArrow $down>
            <Triangle down />
          </ScrollArrow>
        </ScrollTrack>
      </Viewport>

      <Taskbar>
        <button aria-label="Start">
          <Windows />
        </button>
        <TaskSearch>
          <TaskLens />
          Search
        </TaskSearch>
        {apps.map((a) => (
          <TaskApp key={a.name} $open={a.open} aria-label={a.name}>
            {a.icon}
            {a.extra}
          </TaskApp>
        ))}
        <Tray>
          <TrayGroup>
            <TrayIcon>
              <path d="M3 16l9-9 9 9" />
            </TrayIcon>
            <TrayIcon>
              <path d="M1 12C1 1 17-3 22 7M23 1v7h-7M2 23v-7h7M2 17c2 4 6 6 11 6" />
              <circle cx="18" cy="18" r="6" fill="#ff9800" stroke="none" />
            </TrayIcon>
          </TrayGroup>
          <TrayGroup>
            <TrayIcon>
              <path d="M1 10c6-7 16-7 22 0M4 13c5-5 11-5 16 0M7.500 16c3-3 6-3 9 0" />
              <circle cx="12" cy="18.500" r="2" fill="#1b1b1b" stroke="none" />
            </TrayIcon>
            <TrayIcon>
              <path d="M1 9h4l5-5v16l-5-5H1zM13.500 8.500c2 2 2 5 0 7M16.500 6c3.500 3.500 3.500 8.500 0 12M19.500 3.500c5 5 5 12 0 17" />
            </TrayIcon>
            <TrayIcon>
              <rect x="1" y="5" width="19" height="14" rx="3" />
              <rect x="3.500" y="7.500" width="14" height="9" rx="1" fill="#1b1b1b" stroke="none" />
              <path d="M22 9.500v5" strokeWidth="2.500" />
            </TrayIcon>
          </TrayGroup>
          <Clock>
            1:27 PM
            <br />
            2/15/2023
          </Clock>
          <Notifications aria-label="1 notification">1</Notifications>
        </Tray>
      </Taskbar>
    </Screen>
  );
}
